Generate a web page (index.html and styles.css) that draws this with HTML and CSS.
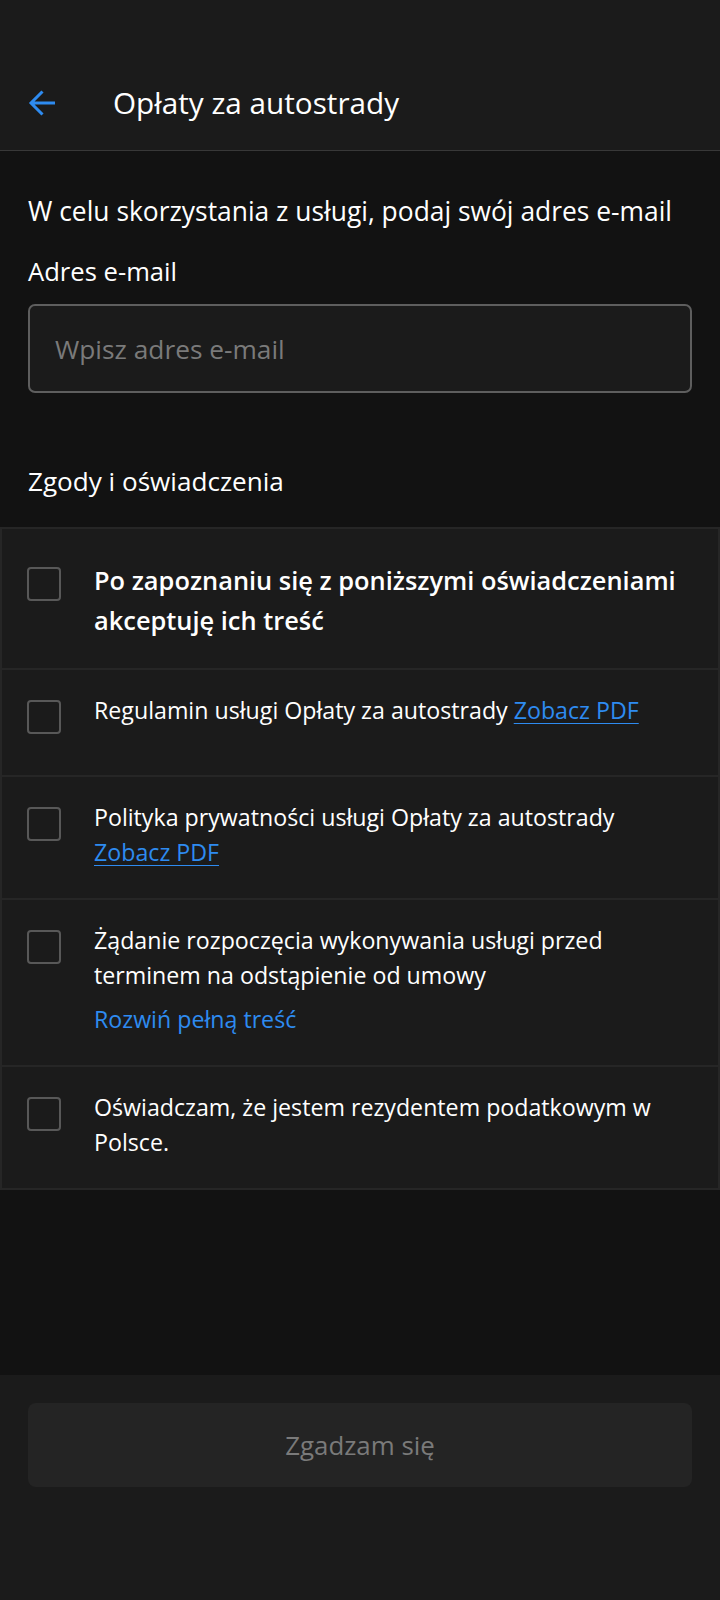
FILE: index.html
```html
<!DOCTYPE html>
<html lang="pl">
<head>
<meta charset="utf-8">
<title>Opłaty za autostrady</title>
<link rel="stylesheet" href="styles.css">
</head>
<body>
<div class="screen">
  <header class="appbar">
    <div class="toolbar">
      <svg class="back" width="28" height="28" viewBox="0 0 28 28" aria-hidden="true">
        <path d="M27 14H3.5M14.5 2.5L3 14l11.5 11.5" fill="none" stroke="#2e8bf0" stroke-width="3"/>
      </svg>
      <h1 class="title">Opłaty za autostrady</h1>
    </div>
  </header>

  <main class="content">
    <section class="form">
      <p class="intro">W celu skorzystania z usługi, podaj swój adres e-mail</p>
      <label class="label" for="email">Adres e-mail</label>
      <input class="input" id="email" type="email" placeholder="Wpisz adres e-mail">
      <h2 class="section-title">Zgody i oświadczenia</h2>
    </section>

    <ul class="consents">
      <li class="consent consent-main">
        <span class="box"></span>
        <div class="consent-text strong">Po zapoznaniu się z poniższymi oświadczeniami akceptuję ich treść</div>
      </li>
      <li class="consent">
        <span class="box"></span>
        <div class="consent-text">Regulamin usługi Opłaty za autostrady <a class="link" href="#">Zobacz PDF</a></div>
      </li>
      <li class="consent">
        <span class="box"></span>
        <div class="consent-text">Polityka prywatności usługi Opłaty za autostrady <a class="link" href="#">Zobacz PDF</a></div>
      </li>
      <li class="consent">
        <span class="box"></span>
        <div class="consent-text">Żądanie rozpoczęcia wykonywania usługi przed terminem na odstąpienie od umowy
          <div class="expand">Rozwiń pełną treść</div>
        </div>
      </li>
      <li class="consent">
        <span class="box"></span>
        <div class="consent-text">Oświadczam, że jestem rezydentem podatkowym w Polsce.</div>
      </li>
    </ul>
  </main>

  <footer class="footer">
    <button class="btn" type="button">Zgadzam się</button>
  </footer>
</div>
</body>
</html>
```
FILE: styles.css
```css
* { box-sizing: border-box; }
html, body { margin: 0; padding: 0; }
body {
  background: #121212;
  color: #ffffff;
  font-family: "Open Sans", Roboto, "Noto Sans", sans-serif;
  font-stretch: 95%;
}
.screen {
  width: 720px;
  height: 1600px;
  display: flex;
  flex-direction: column;
  background: #121212;
}

/* Header */
.appbar {
  background: #1b1b1b;
  padding-top: 56px;
  border-bottom: 1px solid #383838;
}
.toolbar {
  height: 94px;
  display: flex;
  align-items: center;
  padding-left: 28px;
  gap: 57px;
}
.back { display: block; flex: none; }
.title {
  margin: 0;
  font-size: 29.7px;
  font-weight: 400;
  line-height: 40px;
  color: #ffffff;
}

/* Main */
.content { flex: 1; }
.form {
  padding: 42px 28px 0;
  display: flex;
  flex-direction: column;
}
.intro {
  margin: 0;
  font-size: 26.4px;
  line-height: 36px;
}
.label {
  margin-top: 25px;
  font-size: 25.6px;
  line-height: 36px;
}
.input {
  margin-top: 14px;
  height: 89px;
  width: 100%;
  background: #1b1b1b;
  border: 2px solid #5e5e5e;
  border-radius: 7px;
  padding: 0 25px;
  font-family: inherit;
  font-stretch: 95%;
  font-size: 26.3px;
  color: #ffffff;
  outline: none;
}
.input::placeholder { color: #7a7a7a; }
.section-title {
  margin: 70px 0 0;
  font-size: 26.1px;
  font-weight: 400;
  line-height: 36px;
}

.consents {
  list-style: none;
  margin: 28px 0 0;
  padding: 0;
  border-left: 2px solid #262626;
  border-right: 2px solid #262626;
  border-bottom: 2px solid #262626;
}
.consent {
  display: flex;
  align-items: flex-start;
  gap: 33px;
  background: #1b1b1b;
  border-top: 2px solid #262626;
  padding: 23px 26px 28px 25px;
}
.consent-main { padding-top: 31px; padding-bottom: 28px; }
.box {
  flex: none;
  width: 34px;
  height: 34px;
  margin: 7px 0 13px;
  border: 2px solid #585858;
  border-radius: 4px;
}
.consent-text {
  flex: 1;
  font-size: 23.2px;
  line-height: 35px;
  color: #ffffff;
}
.consent-text.strong {
  font-weight: 600;
  line-height: 40px;
  font-size: 25.4px;
}
.link {
  color: #2e8bf0;
  text-decoration: underline;
  text-decoration-thickness: 1px;
  text-underline-offset: 4px;
}
.expand {
  margin-top: 9px;
  color: #2e8bf0;
}

/* Footer */
.footer {
  background: #1b1b1b;
  height: 225px;
  padding: 28px 28px 0;
}
.btn {
  width: 100%;
  height: 84px;
  border: 0;
  border-radius: 8px;
  background: #242424;
  color: #7a7a7a;
  font-family: inherit;
  font-stretch: 95%;
  font-size: 25.9px;
}
```
